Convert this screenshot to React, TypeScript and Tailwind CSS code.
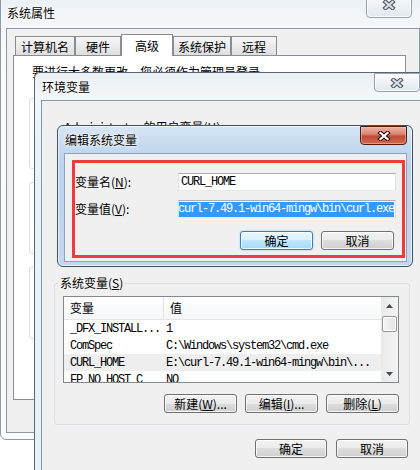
import React from 'react';

const mono = "font-['Liberation_Mono',monospace] text-[12px] tracking-[-1.2px]";
const glow = '[text-shadow:0_0_6px_#ffffff,0_0_3px_#ffffff,0_0_1px_#ffffff]';

const CloseButton = ({ red = false, className = '' }: { red?: boolean; className?: string }) => (
  <div
    className={`absolute flex items-center justify-center rounded-b-[4px] border ${
      red
        ? 'border-[#4e1a12] bg-[linear-gradient(180deg,#eab0a3_0%,#d98a78_40%,#c24a36_55%,#cf6a4f_100%)] shadow-[inset_0_0_0_1px_rgba(255,200,190,0.5)]'
        : 'border-[#97a3af] bg-[linear-gradient(180deg,#fbfcfd_0%,#eef2f6_50%,#e2e8ee_100%)] shadow-[inset_0_0_0_1px_rgba(255,255,255,0.7)]'
    } ${className}`}
  >
    <svg width="14" height="10" viewBox="0 0 14 10">
      <path d="M3.5 2L10.5 8M10.5 2L3.5 8" stroke={red ? '#3b1510' : '#59626c'} strokeWidth="4.4" strokeLinecap="square" fill="none" />
      <path d="M3.5 2L10.5 8M10.5 2L3.5 8" stroke={red ? '#ffffff' : '#d9dee3'} strokeWidth="2.2" strokeLinecap="square" fill="none" />
    </svg>
  </div>
);

const Button = ({ children, focused = false, wide = false }: { children: React.ReactNode; focused?: boolean; wide?: boolean }) => (
  <div
    className={`${wide ? 'w-[73px]' : 'w-[72px]'} h-[19px] shrink-0 rounded-[3px] border flex items-center justify-center leading-none whitespace-nowrap ${
      focused
        ? 'border-[#3c7fb1] bg-[linear-gradient(180deg,#eaf6fd_0%,#d9f0fc_50%,#bee6fd_50%,#a7d9f5_100%)] shadow-[0_0_2px_#7dc4ef,inset_0_0_0_1px_rgba(255,255,255,0.8)]'
        : 'border-[#707070] bg-[linear-gradient(180deg,#f2f2f2_0%,#ebebeb_50%,#dddddd_50%,#cfcfcf_100%)] shadow-[inset_0_0_0_1px_rgba(255,255,255,0.8)]'
    }`}
  >
    {children}
  </div>
);

const TextBox = ({ children }: { children: React.ReactNode }) => (
  <div className="w-[218px] h-[18px] border border-[#abadb3] border-b-[#e3e9ef] border-x-[#dbdfe6] bg-white flex items-center justify-end overflow-hidden pr-px">
    {children}
  </div>
);

const Arrow = ({ down = false }: { down?: boolean }) => (
  <svg width="7" height="4" viewBox="0 0 7 4">
    <path d={down ? 'M0 0H7L3.5 4Z' : 'M0 4H7L3.5 0Z'} fill="#4a4a4a" />
  </svg>
);

const rows = [
  { name: '_DFX_INSTALL...', value: '1' },
  { name: 'ComSpec', value: 'C:\\Windows\\system32\\cmd.exe' },
  { name: 'CURL_HOME', value: 'E:\\curl-7.49.1-win64-mingw\\bin\\...', active: true },
  { name: 'FP_NO_HOST_C', value: 'NO' },
];

const tabs = [
  { label: '计算机名', w: 'w-[60px]' },
  { label: '硬件', w: 'w-[46px]' },
  { label: '高级', w: 'w-[52px]', selected: true },
  { label: '系统保护', w: 'w-[58px]' },
  { label: '远程', w: 'w-[46px]' },
];

export default function App() {
  return (
    <div className="relative w-[420px] h-[470px] overflow-hidden bg-white font-['Noto_Sans_CJK_SC',sans-serif] text-[12px] leading-[14px] text-black">
      {/* 系统属性 */}
      <div className="absolute left-0 top-[-8px] w-[426px] h-[448px] rounded-[6px] border border-[#8e9aa6] bg-[linear-gradient(180deg,#e9eff5_0%,#f3f6f9_24px,#fbfcfd_80px,#fafbfc_100%)] flex flex-col">
        <div className={`h-[35px] shrink-0 pl-[6px] pt-[13px] ${glow}`}>系统属性</div>
        <CloseButton className="left-[365px] top-[-1px] w-[46px] h-[26px]" />
        <div className="flex-1 min-h-0 mx-[5px] mb-[6px] border border-[#8d98a3] bg-[#f0f0f0] flex flex-col">
          <div className="relative z-10 -mb-px flex items-end h-[27px] pl-[8px]">
            {tabs.map((t) =>
              t.selected ? (
                <div key={t.label} className={`${t.w} h-[22px] border-t border-x border-[#898c95] bg-white flex items-center justify-center`}>
                  {t.label}
                </div>
              ) : (
                <div
                  key={t.label}
                  className={`${t.w} h-[19px] mb-px border-t border-x border-[#898c95] bg-[linear-gradient(180deg,#f7f7f7_0%,#ebebeb_50%,#dedede_100%)] flex items-center justify-center pt-[2px]`}
                >
                  {t.label}
                </div>
              )
            )}
          </div>
          <div className="flex-1 ml-[6px] mr-[13px] mb-[32px] border border-[#898c95] bg-white flex flex-col">
            <div className="pl-[18px] pt-[8px] leading-[16px] whitespace-nowrap">要进行大多数更改，您必须作为管理员登录。</div>
            <div className="ml-[15px] mt-[18px] w-[360px] h-[71px] rounded-[3px] border border-[#d5dfe5]" />
            <div className="ml-[15px] mt-[13px] w-[360px] h-[72px] rounded-[3px] border border-[#d5dfe5]" />
            <div className="ml-[15px] mt-[13px] w-[360px] h-[72px] rounded-[3px] border border-[#d5dfe5]" />
          </div>
        </div>
      </div>

      {/* 环境变量 */}
      <div className="absolute left-[34px] top-[72px] w-[392px] h-[410px] rounded-t-[6px] border border-[#5c6773] bg-[linear-gradient(180deg,#eaf0f5_0%,#f4f7fa_26px,#e6f4f8_60px,#e2f3f7_100%)] flex flex-col">
        <div className={`h-[27px] shrink-0 pl-[7px] flex items-center ${glow}`}>环境变量</div>
        <CloseButton className="left-[339px] top-0 w-[46px] h-[19px]" />
        <div className="flex-1 ml-[6px] border border-[#8796a5] bg-[#f0f0f0] flex flex-col">
          <div className="h-[182px] shrink-0 pl-[22px] pt-[19px] whitespace-nowrap">
            Administrator 的用户变量(<span className="underline">U</span>)
          </div>

          <div className="relative ml-[12px] w-[356px] rounded-[3px] border border-[#d5dfe5] pb-[11px]">
            <span className="absolute left-[3px] top-[-8px] px-[2px] bg-[#f0f0f0]">
              系统变量(<span className="underline">S</span>)
            </span>

            <div className="ml-[8px] mt-[12px] w-[336px] h-[87px] border border-[#828790] bg-white flex overflow-hidden">
              <div className="flex-1 min-w-0 flex flex-col">
                <div className="h-[23px] shrink-0 flex border-b border-[#e5e5e5] bg-[linear-gradient(180deg,#ffffff_0%,#f6f7f9_100%)]">
                  <div className="w-[100px] border-r border-[#e5e5e5] pl-[6px] flex items-center">变量</div>
                  <div className="flex-1 pl-[6px] flex items-center">值</div>
                </div>
                {rows.map((r) => (
                  <div key={r.name} className={`h-[17px] shrink-0 flex items-center whitespace-nowrap ${mono} ${r.active ? 'bg-[#eeeeee]' : ''}`}>
                    <div className="w-[100px] pl-[6px]">{r.name}</div>
                    <div className="flex-1 pl-[2px]">{r.value}</div>
                  </div>
                ))}
              </div>
              <div className="w-[17px] shrink-0 flex flex-col bg-[linear-gradient(90deg,#e9e9e9_0%,#f4f4f4_100%)]">
                <div className="h-[17px] flex items-center justify-center">
                  <Arrow />
                </div>
                <div className="mx-px mt-[2px] h-[16px] rounded-[2px] border border-[#959595] bg-[linear-gradient(90deg,#f4f4f4_0%,#e4e4e4_100%)] shadow-[inset_0_0_0_1px_#ffffff]" />
                <div className="flex-1" />
                <div className="h-[17px] flex items-center justify-center">
                  <Arrow down />
                </div>
              </div>
            </div>

            <div className="mt-[11px] flex justify-end gap-[8px] pr-[10px]">
              <Button wide>
                新建(<span className="underline">W</span>)...
              </Button>
              <Button wide>
                编辑(<span className="underline">I</span>)...
              </Button>
              <Button wide>
                删除(<span className="underline">L</span>)
              </Button>
            </div>
          </div>

          <div className="mt-[14px] flex gap-[9px] pl-[213px]">
            <Button>确定</Button>
            <Button>取消</Button>
          </div>
        </div>
      </div>

      {/* 编辑系统变量 */}
      <div className="absolute left-[57px] top-[125px] w-[356px] h-[142px] rounded-[6px] border border-[#3f5266] bg-[linear-gradient(180deg,#d7e6f5_0%,#c6daef_20px,#bcd3ec_40px,#c3d8ee_100%)] shadow-[inset_0_0_0_1px_rgba(255,255,255,0.6)] flex flex-col">
        <div className={`h-[27px] shrink-0 pl-[7px] flex items-center ${glow}`}>编辑系统变量</div>
        <CloseButton red className="left-[302px] top-0 w-[47px] h-[19px]" />
        <div className="flex-1 ml-[6px] mr-[5px] mb-[4px] border border-[#8ea3ba] bg-[#f0f0f0] flex flex-col pl-[10px] pt-[19px]">
          <div className="flex items-center">
            <div className="w-[103px] whitespace-nowrap">
              变量名(<span className="underline">N</span>):
            </div>
            <TextBox>
              <span className={`w-full pl-[2px] ${mono}`}>CURL_HOME</span>
            </TextBox>
          </div>
          <div className="mt-[9px] flex items-center">
            <div className="w-[103px] whitespace-nowrap">
              变量值(<span className="underline">V</span>):
            </div>
            <TextBox>
              <span className={`shrink-0 whitespace-nowrap bg-[#3399ff] text-white leading-[15px] ${mono}`}>
                E:\curl-7.49.1-win64-mingw\bin\curl.exe
              </span>
            </TextBox>
          </div>
          <div className="mt-[13px] flex gap-[8px] pl-[165px]">
            <Button focused wide>
              确定
            </Button>
            <Button wide>取消</Button>
          </div>
        </div>
      </div>

      {/* annotation */}
      <div className="absolute left-[72px] top-[160px] w-[333px] h-[98px] border-[3px] border-[#ef3b3b]" />
    </div>
  );
}
